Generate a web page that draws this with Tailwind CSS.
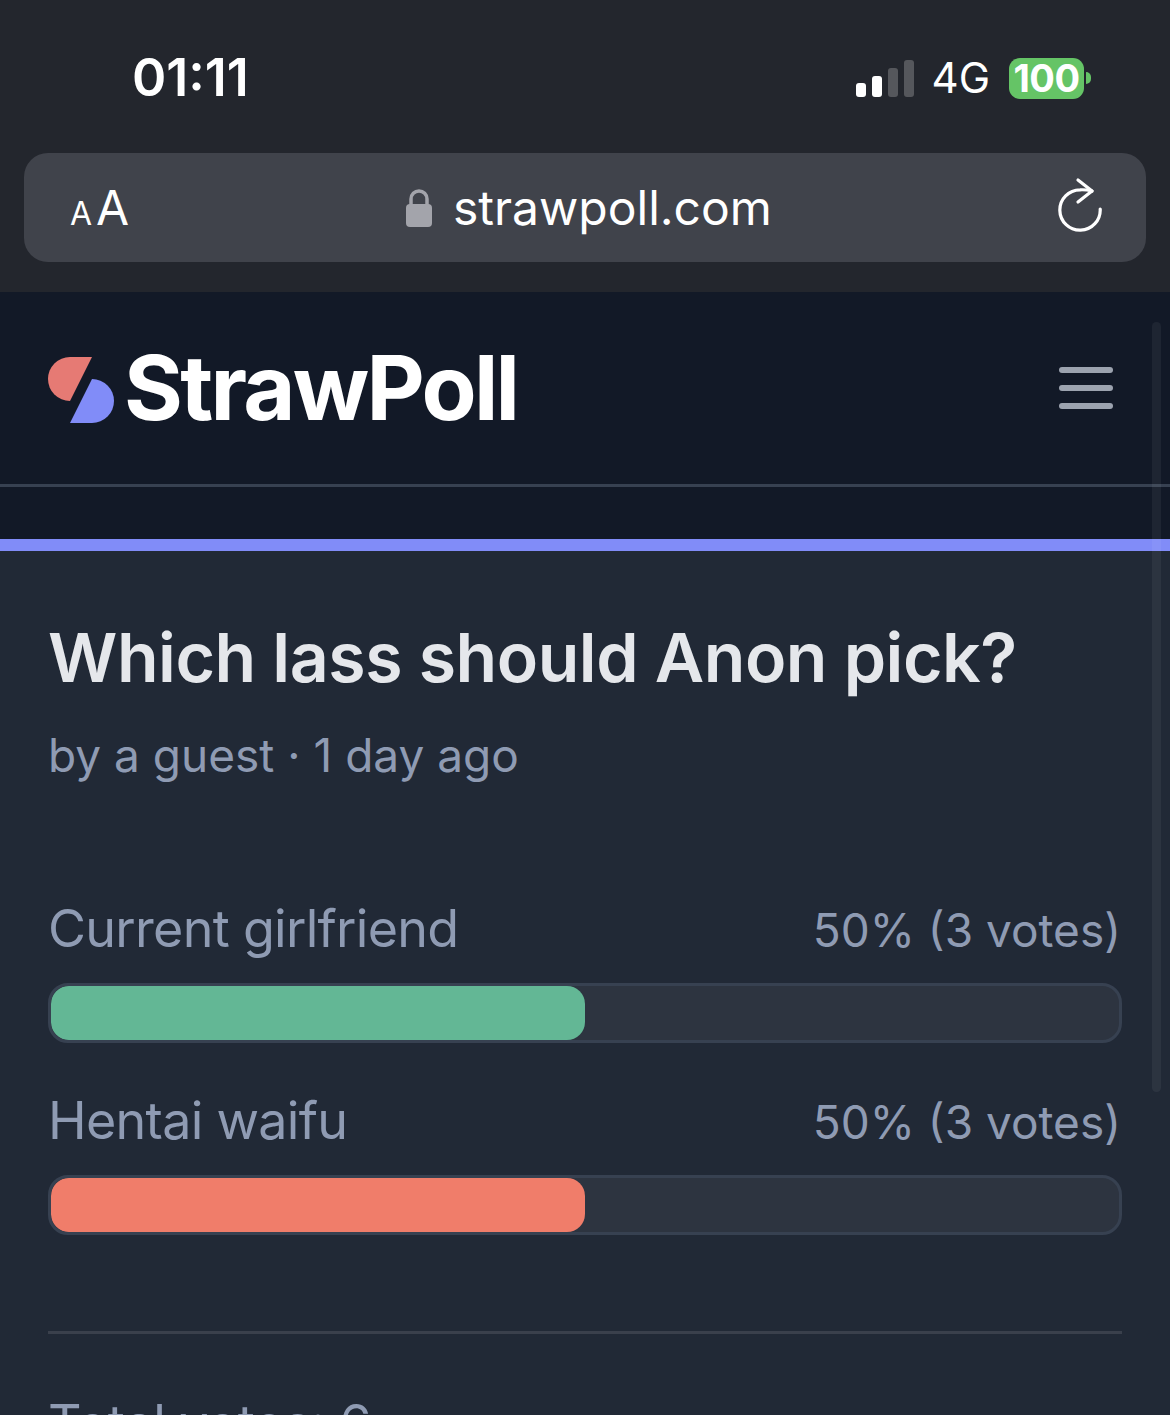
<!DOCTYPE html>
<html lang="en">
<head>
  <meta charset="UTF-8" />
  <meta name="viewport" content="width=device-width, initial-scale=1.0" />
  <title>StrawPoll</title>
  <script src="https://cdn.jsdelivr.net/npm/@tailwindcss/browser@4"></script>
</head>
<body class="relative w-[1170px] h-[1415px] overflow-hidden bg-[#212936] font-['Inter',sans-serif]">

<!-- browser chrome -->
<div class="h-[292px] bg-[#23262d] text-white">
  <div class="h-[153px] flex items-start justify-between">
    <div class="mt-[48px] ml-[132px] text-[52px] leading-[60px] font-semibold tracking-[0px]">01:11</div>
    <div class="mt-[57px] mr-[79px] flex items-center">
      <div class="flex items-end gap-[6px] h-[37px]">
        <div class="w-[10px] h-[14px] rounded-[3px] bg-white"></div>
        <div class="w-[10px] h-[21px] rounded-[3px] bg-white"></div>
        <div class="w-[10px] h-[29px] rounded-[3px] bg-[#55575c]"></div>
        <div class="w-[10px] h-[37px] rounded-[3px] bg-[#55575c]"></div>
      </div>
      <div class="ml-[18px] text-[42px] leading-[42px]">4G</div>
      <div class="ml-[19px] w-[75px] h-[41px] rounded-[11px] bg-[#65c466] flex items-center justify-center text-[38px] leading-none font-bold tracking-[-0.5px]">100</div>
      <div class="ml-[2px] w-[5px] h-[12px] rounded-r-full bg-[#65c466]"></div>
    </div>
  </div>
  <div class="mx-[24px] h-[109px] rounded-[24px] bg-[#40434b] relative flex items-center justify-between pl-[46px] pr-[42px]">
    <div class="flex items-baseline font-normal">
      <span class="text-[32px] leading-none mr-[4px]">A</span><span class="text-[48px] leading-none">A</span>
    </div>
    <div class="absolute left-[381px] top-[34px] flex items-center">
      <svg width="28" height="40" viewBox="0 0 28 40" class="mr-[20px]">
        <path d="M6 18V11a8 8 0 0 1 16 0v7" fill="none" stroke="#a3a4ab" stroke-width="3.5"/>
        <rect x="1" y="16" width="26" height="23" rx="4" fill="#a3a4ab"/>
      </svg>
      <span class="text-[48px] leading-[42px]">strawpoll.com</span>
    </div>
    <svg width="48" height="56" viewBox="0 0 48 56" fill="none" stroke="white" stroke-width="3.2" stroke-linecap="round" stroke-linejoin="round" class="self-start mt-[23px]">
      <path d="M44.200 33A20.200 20.200 0 1 1 24 13.800Q30 13.500 36 15"/>
      <path d="M22 4L36 15L22 26"/>
    </svg>
  </div>
</div>

<!-- site nav -->
<div class="h-[192px] bg-[#121927] flex items-center justify-between pl-[48px] pr-[57px]">
  <div class="flex items-center">
    <svg width="67" height="67" viewBox="0 0 67 67" class="mt-[4px]">
      <path d="M44 0L22 44A22 22 0 0 1 22 0Z" fill="#e67a74"/>
      <path d="M22 66L44 22A22 22 0 0 1 44 66Z" fill="#818cf8"/>
    </svg>
    <span class="ml-[9px] text-[90px] leading-[84px] font-bold tracking-[-2.7px] text-white">StrawPoll</span>
  </div>
  <div class="flex flex-col gap-[12px]">
    <div class="w-[54px] h-[6px] rounded-full bg-[#9ca3af]"></div>
    <div class="w-[54px] h-[6px] rounded-full bg-[#9ca3af]"></div>
    <div class="w-[54px] h-[6px] rounded-full bg-[#9ca3af]"></div>
  </div>
</div>
<div class="h-[55px] bg-[#121927] border-t-[3px] border-[#374151]"></div>

<!-- poll card -->
<div class="border-t-[12px] border-[#818cf8] px-[48px]">
  <h1 class="mt-[68px] text-[68px] leading-[76px] font-semibold tracking-[-0.47px] text-[#e5e7eb]">Which lass should Anon pick?</h1>
  <p class="mt-[32px] text-[46px] leading-[56px] text-[#8f9bb3]">by a guest · 1 day ago</p>

  <div class="mt-[118px]">
    <div class="flex items-center justify-between pr-[1px] h-[56px]">
      <span class="text-[52px] tracking-[-0.7px] text-[#8f9bb3]">Current girlfriend</span>
      <span class="text-[46px] mt-[2px] text-[#8f9bb3]">50% (3 votes)</span>
    </div>
    <div class="mt-[26px] h-[60px] rounded-[20px] border-[3px] border-[#374151] bg-[#2d3440] overflow-hidden">
      <div class="h-full w-1/2 rounded-[18px] bg-[#63b795]"></div>
    </div>
  </div>

  <div class="mt-[50px]">
    <div class="flex items-center justify-between pr-[1px] h-[56px]">
      <span class="text-[52px] tracking-[-0.7px] text-[#8f9bb3]">Hentai waifu</span>
      <span class="text-[46px] mt-[2px] text-[#8f9bb3]">50% (3 votes)</span>
    </div>
    <div class="mt-[26px] h-[60px] rounded-[20px] border-[3px] border-[#374151] bg-[#2d3440] overflow-hidden">
      <div class="h-full w-1/2 rounded-[18px] bg-[#f07d6a]"></div>
    </div>
  </div>

  <div class="mt-[96px] border-t-[3px] border-[#3a404c]"></div>
  <p class="mt-[60px] text-[52px] leading-[60px] tracking-[-0.5px] text-[#8f9bb3]">Total votes: 6</p>
</div>

<!-- overlay scrollbar -->
<div class="absolute left-[1152px] top-[322px] w-[9px] h-[770px] rounded-full bg-white/5"></div>

</body>
</html>
